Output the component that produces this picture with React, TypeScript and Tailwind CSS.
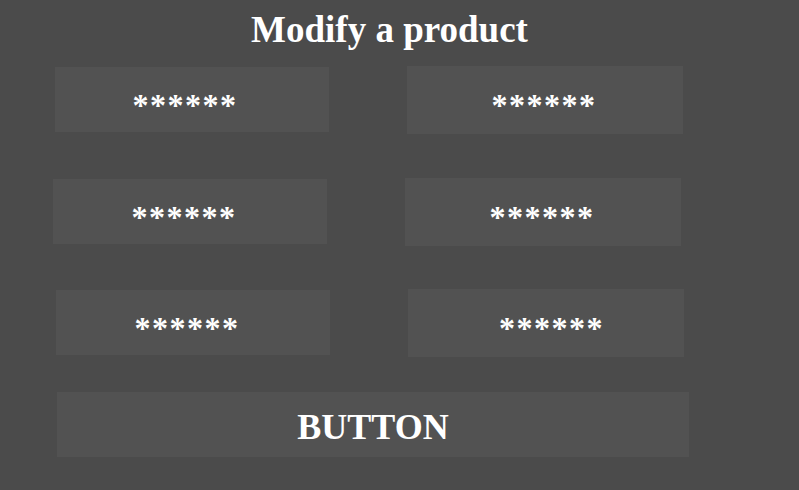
import React from "react";

const serif = { fontFamily: '"Liberation Serif", "Times New Roman", serif' };

function Field({ cls, textCls }: { cls: string; textCls: string }) {
  return (
    <div className={`flex items-center justify-center bg-[#525252] ${cls}`}>
      <span className={`text-[32px] font-bold leading-none tracking-[1.5px] text-white ${textCls}`}>******</span>
    </div>
  );
}

export default function App() {
  return (
    <div className="w-[799px] h-[490px] bg-[#4b4b4b] overflow-hidden" style={serif}>
      <h1 className="pt-[10px] pr-[20px] h-[66px] text-center text-[37px] font-bold leading-[40px] text-white">
        Modify a product
      </h1>
      <div className="flex items-start h-[112px]">
        <Field cls="ml-[55px] mt-[1px] w-[274px] h-[65px]" textCls="pr-[14px] pt-[10px]" />
        <Field cls="ml-[78px] w-[276px] h-[68px]" textCls="pr-[2px] pt-[10px]" />
      </div>
      <div className="flex items-start h-[111px]">
        <Field cls="ml-[53px] mt-[1px] w-[274px] h-[65px]" textCls="pr-[12px] pt-[10px]" />
        <Field cls="ml-[78px] w-[276px] h-[68px]" textCls="pr-[2px] pt-[10px]" />
      </div>
      <div className="flex items-start h-[103px]">
        <Field cls="ml-[56px] mt-[1px] w-[274px] h-[65px]" textCls="pr-[12px] pt-[10px]" />
        <Field cls="ml-[78px] w-[276px] h-[68px]" textCls="pl-[11px] pt-[10px]" />
      </div>
      <div className="ml-[57px] w-[632px] h-[65px] bg-[#525252] flex items-center justify-center">
        <span className="text-[36px] font-bold leading-none text-white pt-[4px]">BUTTON</span>
      </div>
    </div>
  );
}
